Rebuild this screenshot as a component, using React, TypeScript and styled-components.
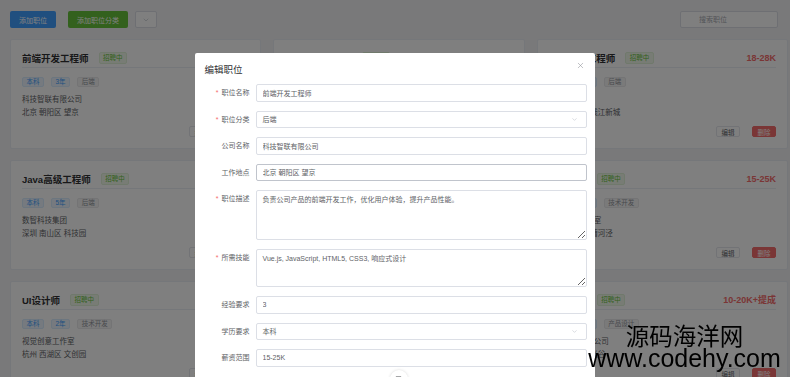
import styled, { createGlobalStyle } from "styled-components";
import { ChevronDown, X } from "lucide-react";

type Job = {
  title: string;
  salary: string;
  tags: string[];
  company: string;
  location: string;
};

const jobs: Job[] = [
  { title: "前端开发工程师", salary: "15-25K", tags: ["本科", "3年", "后端"], company: "科技智联有限公司", location: "北京 朝阳区 望京" },
  { title: "后端开发工程师", salary: "20-35K", tags: ["本科", "5年", "后端"], company: "云端数据科技", location: "上海 浦东新区 张江" },
  { title: "人工智能工程师", salary: "18-28K", tags: ["硕士", "3年", "后端"], company: "未来智能科技", location: "杭州 上城区 钱江新城" },
  { title: "Java高级工程师", salary: "20-30K", tags: ["本科", "5年", "后端"], company: "数智科技集团", location: "深圳 南山区 科技园" },
  { title: "测试开发工程师", salary: "12-20K", tags: ["本科", "2年", "技术开发"], company: "优测软件有限公司", location: "广州 天河区 珠江新城" },
  { title: "产品经理", salary: "15-25K", tags: ["本科", "3年", "技术开发"], company: "创想产品工作室", location: "上海 徐汇区 漕河泾" },
  { title: "UI设计师", salary: "10-18K", tags: ["本科", "2年", "技术开发"], company: "视觉创意工作室", location: "杭州 西湖区 文创园" },
  { title: "数据分析师", salary: "12-22K", tags: ["本科", "3年", "产品设计"], company: "慧数信息科技", location: "成都 高新区 天府软件园" },
  { title: "运营专员", salary: "10-20K+提成", tags: ["大专", "1年", "产品设计"], company: "星辰网络科技公司", location: "武汉 洪山区 光谷" },
];

const GlobalStyle = createGlobalStyle`
  html, body {
    margin: 0;
    height: 100%;
    overflow: hidden;
  }
  body {
    background: #f2f3f5;
    font-family: "Liberation Sans", "Noto Sans CJK SC", sans-serif;
    color: #303133;
  }
  * { box-sizing: border-box; }
`;

const App = () => {
  return (
    <>
      <GlobalStyle />
      <Page>
        <Toolbar>
          <ToolGroup>
            <ToolButton tone="primary">添加职位</ToolButton>
            <ToolButton tone="success">添加职位分类</ToolButton>
            <DropButton>
              <ChevronDown size={8} color="#c0c4cc" />
            </DropButton>
          </ToolGroup>
          <SearchBox placeholder="搜索职位" />
        </Toolbar>
        <Grid>
          {jobs.map((job) => (
            <Card key={job.title}>
              <CardHead>
                <TitleGroup>
                  <JobTitle>{job.title}</JobTitle>
                  <StatusTag>招聘中</StatusTag>
                </TitleGroup>
                <Salary>{job.salary}</Salary>
              </CardHead>
              <TagRow>
                {job.tags.map((t, i) => (
                  <Tag key={t + i} tone={i < 2 ? "primary" : "info"}>
                    {t}
                  </Tag>
                ))}
              </TagRow>
              <InfoBlock>
                <InfoLine>{job.company}</InfoLine>
                <InfoLine>{job.location}</InfoLine>
              </InfoBlock>
              <Actions>
                <SmallButton>编辑</SmallButton>
                <SmallButton danger>删除</SmallButton>
              </Actions>
            </Card>
          ))}
        </Grid>
      </Page>

      <Overlay>
        <Dialog>
          <DialogHeader>
            <DialogTitle>编辑职位</DialogTitle>
            <CloseButton>
              <X size={9} strokeWidth={1.5} color="#909399" />
            </CloseButton>
          </DialogHeader>
          <FormRow>
            <Label required>职位名称</Label>
            <TextInput defaultValue="前端开发工程师" />
          </FormRow>
          <FormRow>
            <Label required>职位分类</Label>
            <SelectBox>
              后端
              <ChevronDown size={7} color="#c0c4cc" />
            </SelectBox>
          </FormRow>
          <FormRow>
            <Label>公司名称</Label>
            <TextInput defaultValue="科技智联有限公司" />
          </FormRow>
          <FormRow>
            <Label>工作地点</Label>
            <TextInput hovered defaultValue="北京 朝阳区 望京" />
          </FormRow>
          <FormRow>
            <Label required>职位描述</Label>
            <TextArea rows={1} tall defaultValue="负责公司产品的前端开发工作，优化用户体验，提升产品性能。" />
          </FormRow>
          <FormRow>
            <Label required>所需技能</Label>
            <TextArea rows={1} defaultValue="Vue.js, JavaScript, HTML5, CSS3, 响应式设计" />
          </FormRow>
          <FormRow>
            <Label>经验要求</Label>
            <TextInput defaultValue="3" />
          </FormRow>
          <FormRow>
            <Label>学历要求</Label>
            <SelectBox>
              本科
              <ChevronDown size={7} color="#c0c4cc" />
            </SelectBox>
          </FormRow>
          <FormRow>
            <Label>薪资范围</Label>
            <TextInput defaultValue="15-25K" />
          </FormRow>
          <ScrollHint>
            <svg width="7" height="7" viewBox="0 0 8 8">
              <rect x="1" y="0.5" width="6" height="1.2" fill="#606266" />
              <path d="M1 3 L7 3 L4 7 Z" fill="#606266" />
            </svg>
          </ScrollHint>
        </Dialog>
      </Overlay>

      <Watermark>
        <MarkCn>源码海洋网</MarkCn>
        <MarkUrl>www.codehy.com</MarkUrl>
      </Watermark>
    </>
  );
};

const Page = styled.div`
  padding: 11px 2px 0 10px;
`;

const Toolbar = styled.div`
  display: flex;
  justify-content: space-between;
  align-items: center;
  height: 17px;
  margin-bottom: 11px;
  padding-right: 10px;
`;

const ToolGroup = styled.div`
  display: flex;
  align-items: center;
  gap: 12px;
`;

const ToolButton = styled.button<{ tone: "primary" | "success" }>`
  height: 17px;
  padding: 0 9px;
  border: none;
  border-radius: 2px;
  font: inherit;
  font-size: 7px;
  color: #fff;
  background: ${(p) => (p.tone === "primary" ? "#409eff" : "#67c23a")};
`;

const DropButton = styled.div`
  width: 22px;
  height: 17px;
  margin-left: -5px;
  display: flex;
  align-items: center;
  justify-content: center;
  background: #fff;
  border: 1px solid #dcdfe6;
  border-radius: 2px;
`;

const SearchBox = styled.input`
  width: 98px;
  height: 17px;
  padding: 0 0 0 18px;
  border: 1px solid #dcdfe6;
  border-radius: 2px;
  background: #fff;
  font: inherit;
  font-size: 7px;
  &::placeholder {
    color: #a8abb2;
  }
`;

const Grid = styled.div`
  display: grid;
  grid-template-columns: repeat(3, 1fr);
  gap: 11px 12px;
`;

const Card = styled.div`
  background: #fff;
  border: 1px solid #ebeef5;
  border-radius: 2px;
  padding: 9px 11px 11px;
`;

const CardHead = styled.div`
  display: flex;
  align-items: center;
  justify-content: space-between;
  height: 19px;
  padding-bottom: 1px;
  border-bottom: 1px solid #ebeef5;
`;

const TitleGroup = styled.div`
  display: flex;
  align-items: center;
`;

const JobTitle = styled.div`
  font-size: 9.5px;
  font-weight: bold;
  color: #303133;
`;

const StatusTag = styled.span`
  margin-left: 10px;
  height: 12px;
  line-height: 10px;
  padding: 0 3.5px;
  font-size: 6.5px;
  color: #67c23a;
  background: #f0f9eb;
  border: 1px solid #e1f3d8;
  border-radius: 2px;
`;

const Salary = styled.div`
  font-size: 9px;
  font-weight: bold;
  color: #f56c6c;
`;

const TagRow = styled.div`
  display: flex;
  gap: 7px;
  margin-top: 9px;
`;

const Tag = styled.span<{ tone: "primary" | "info" }>`
  height: 10px;
  line-height: 8px;
  padding: 0 3.5px;
  font-size: 6.5px;
  border-radius: 2px;
  border: 1px solid ${(p) => (p.tone === "primary" ? "#d9ecff" : "#e9e9eb")};
  background: ${(p) => (p.tone === "primary" ? "#ecf5ff" : "#f4f4f5")};
  color: ${(p) => (p.tone === "primary" ? "#409eff" : "#909399")};
`;

const InfoBlock = styled.div`
  margin-top: 6px;
`;

const InfoLine = styled.div`
  font-size: 7.5px;
  line-height: 13px;
  color: #606266;
`;

const Actions = styled.div`
  display: flex;
  justify-content: flex-end;
  gap: 12px;
  margin-top: 7px;
`;

const SmallButton = styled.button<{ danger?: boolean }>`
  width: 24px;
  height: 11px;
  padding: 0;
  font: inherit;
  font-size: 6.5px;
  border-radius: 2px;
  border: 1px solid ${(p) => (p.danger ? "#f56c6c" : "#e4e7ed")};
  background: ${(p) => (p.danger ? "#f56c6c" : "#fff")};
  color: ${(p) => (p.danger ? "#fff" : "#606266")};
`;

const Overlay = styled.div`
  position: fixed;
  inset: 0;
  background: rgba(0, 0, 0, 0.5);
  display: flex;
  justify-content: center;
  align-items: flex-start;
  padding: 53px 0 0 0;
`;

const Dialog = styled.div`
  position: relative;
  width: 400px;
  min-height: 340px;
  margin-left: -1px;
  background: #fff;
  border-radius: 2px;
  padding: 10px 8px 20px 10px;
`;

const DialogHeader = styled.div`
  display: flex;
  justify-content: space-between;
  align-items: flex-start;
  height: 13px;
  margin-bottom: 8px;
`;

const DialogTitle = styled.div`
  font-size: 9.5px;
  line-height: 13px;
  color: #303133;
`;

const CloseButton = styled.div`
  display: flex;
  margin: -2.5px 1.5px 0 0;
`;

const FormRow = styled.div`
  display: flex;
  align-items: flex-start;
  margin-bottom: 9px;
`;

const Label = styled.div<{ required?: boolean }>`
  width: 51px;
  flex-shrink: 0;
  padding-right: 6px;
  text-align: right;
  font-size: 7px;
  line-height: 17.5px;
  color: #606266;
  &::before {
    content: ${(p) => (p.required ? '"*"' : '""')};
    color: #f56c6c;
    margin-right: 3px;
  }
`;

const TextInput = styled.input<{ hovered?: boolean }>`
  flex: 1;
  min-width: 0;
  height: 17.5px;
  padding: 0 6px;
  font: inherit;
  font-size: 7px;
  color: #606266;
  border: 1px solid ${(p) => (p.hovered ? "#c0c4cc" : "#dcdfe6")};
  border-radius: 2px;
  outline: none;
`;

const SelectBox = styled.div`
  flex: 1;
  height: 17.5px;
  display: flex;
  align-items: center;
  justify-content: space-between;
  padding: 0 8px 0 6px;
  font-size: 7px;
  color: #606266;
  border: 1px solid #dcdfe6;
  border-radius: 2px;
`;

const TextArea = styled.textarea<{ tall?: boolean }>`
  flex: 1;
  min-width: 0;
  height: ${(p) => (p.tall ? 50 : 38)}px;
  padding: 3px 6px;
  font: inherit;
  font-size: 7px;
  line-height: 11px;
  color: #606266;
  border: 1px solid #dcdfe6;
  border-radius: 2px;
  outline: none;
  resize: vertical;
`;

const ScrollHint = styled.div`
  position: absolute;
  left: 195px;
  top: 317px;
  width: 18px;
  height: 18px;
  border-radius: 50%;
  background: #fff;
  box-shadow: 0 0 3px rgba(0, 0, 0, 0.15);
  display: flex;
  align-items: center;
  justify-content: center;
`;

const Watermark = styled.div`
  position: fixed;
  left: 584px;
  top: 323px;
  width: 201px;
  text-align: center;
  color: #000;
`;

const MarkCn = styled.div`
  font-family: "Noto Sans CJK SC", sans-serif;
  font-size: 23.5px;
  line-height: 24px;
`;

const MarkUrl = styled.div`
  font-family: "Liberation Sans", sans-serif;
  font-size: 25px;
  line-height: 25px;
  margin-top: -1px;
`;

export default App;
